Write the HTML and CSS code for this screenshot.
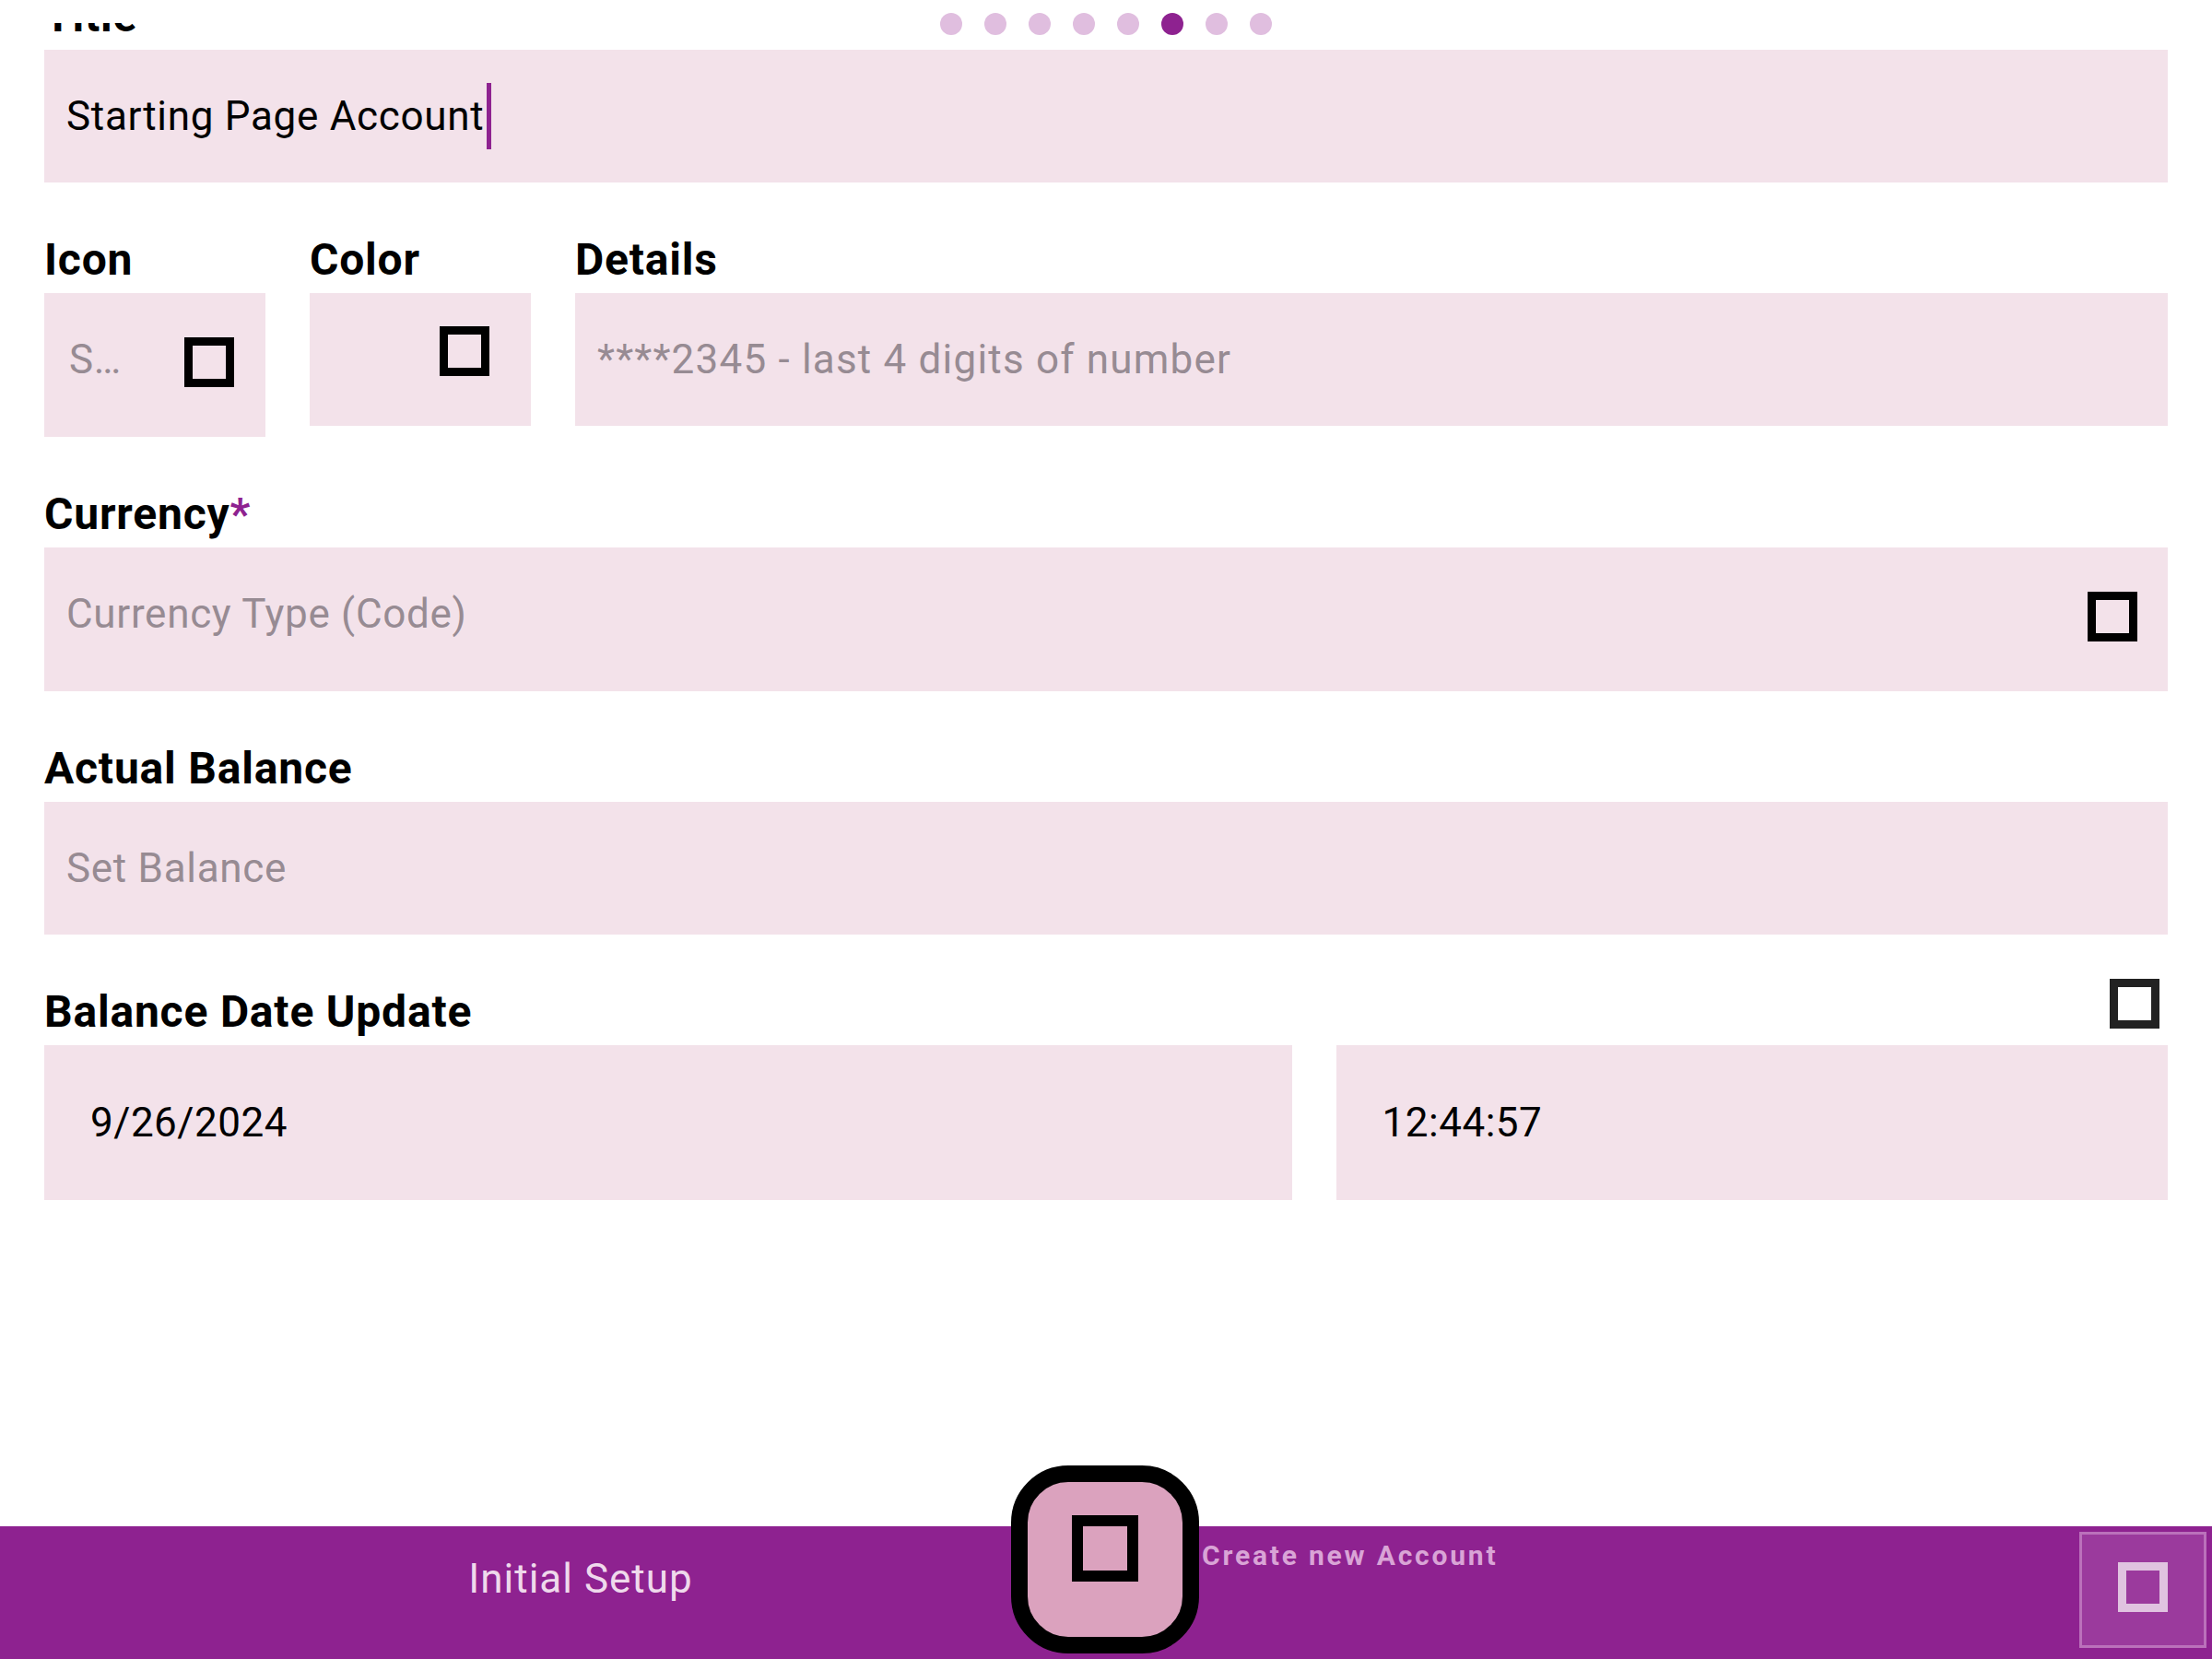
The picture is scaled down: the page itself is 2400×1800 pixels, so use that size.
FILE: index.html
```html
<!DOCTYPE html>
<html lang="en">
<head>
<meta charset="utf-8">
<title>Create new Account</title>
<link rel="stylesheet" href="styles.css">
</head>
<body>
<div class="app">
  <div class="dots">
    <span class="dot"></span><span class="dot"></span><span class="dot"></span><span class="dot"></span>
    <span class="dot"></span><span class="dot active"></span><span class="dot"></span><span class="dot"></span>
  </div>
  <main class="viewport">
    <div class="content">
      <section class="section">
        <div class="label">Title</div>
        <div class="field"><span class="value">Starting Page Account</span><span class="caret"></span></div>
      </section>

      <section class="section row3">
        <div class="col">
          <div class="label">Icon</div>
          <div class="field field-icon"><span class="placeholder">S…</span><span class="tofu"></span></div>
        </div>
        <div class="col">
          <div class="label">Color</div>
          <div class="field field-color"><span class="tofu"></span></div>
        </div>
        <div class="col">
          <div class="label">Details</div>
          <div class="field"><span class="placeholder wide">****2345 - last 4 digits of number</span></div>
        </div>
      </section>

      <section class="section">
        <div class="label">Currency<span class="req">*</span></div>
        <div class="field field-tall field-split"><span class="placeholder">Currency Type (Code)</span><span class="tofu tofu-down"></span></div>
      </section>

      <section class="section">
        <div class="label">Actual Balance</div>
        <div class="field"><span class="placeholder">Set Balance</span></div>
      </section>

      <section class="section">
        <div class="label-row">
          <div class="label">Balance Date Update</div>
          <span class="tofu tofu-dark"></span>
        </div>
        <div class="date-row">
          <div class="field field-date"><span class="value">9/26/2024</span></div>
          <div class="field field-date"><span class="value">12:44:57</span></div>
        </div>
      </section>
    </div>
  </main>
  <nav class="bottombar">
    <div class="nav-left">Initial Setup</div>
    <div class="nav-mid">Create new Account</div>
    <button class="nav-right" type="button"><span class="tofu tofu-light"></span></button>
    <button class="fab" type="button"><span class="tofu tofu-fab"></span></button>
  </nav>
</div>
</body>
</html>
```

FILE: styles.css
```css
* { box-sizing: border-box; }

html, body {
  margin: 0;
  padding: 0;
  background: #ffffff;
}

body {
  width: 2400px;
  height: 1800px;
  overflow: hidden;
  font-family: Roboto, "Noto Sans", sans-serif;
  color: #000000;
}

.app {
  position: relative;
  width: 2400px;
  height: 1800px;
  display: flex;
  flex-direction: column;
}

/* page indicator */
.dots {
  position: absolute;
  top: 14px;
  left: 0;
  right: 0;
  display: flex;
  justify-content: center;
  gap: 24px;
  z-index: 2;
}
.dot {
  width: 24px;
  height: 24px;
  border-radius: 50%;
  background: #e0bedf;
}
.dot.active { background: #8e2290; }

/* scroll area */
.viewport {
  flex: 1;
  margin-top: 25px;
  overflow: hidden;
}
.content {
  margin-top: -35px;
  padding: 0 48px;
}

.section + .section { margin-top: 56px; }

.label {
  font-size: 48px;
  font-weight: 700;
  line-height: 56px;
  letter-spacing: 0.8px;
  margin-bottom: 8px;
  white-space: nowrap;
}
.req { color: #8e2290; }

.field {
  height: 144px;
  background: #f3e2ea;
  display: flex;
  align-items: center;
  padding: 0 24px;
  font-size: 44px;
  line-height: 52px;
  letter-spacing: 0.7px;
}
.value { color: #000000; white-space: nowrap; }
.placeholder { color: #978b93; white-space: nowrap; }
.placeholder.wide { letter-spacing: 1.2px; }

.caret {
  display: inline-block;
  width: 5px;
  height: 72px;
  margin-left: 3px;
  background: #8e2290;
}

/* tofu / missing-glyph icons */
.tofu {
  display: block;
  flex: none;
  width: 54px;
  height: 54px;
  border: 9px solid #000000;
}
.tofu-down { margin-top: 6px; }
.tofu-dark { border-color: #222222; }
.tofu-light { border-color: #e0c3e0; }
.tofu-fab {
  width: 72px;
  height: 72px;
  border-width: 12px;
  margin-bottom: 24px;
}

/* icon / color / details row */
.row3 {
  display: grid;
  grid-template-columns: 240px 240px 1fr;
  column-gap: 48px;
  align-items: start;
}
.field-icon {
  height: 156px;
  padding: 0 34px 12px 27px;
  justify-content: space-between;
}
.field-icon .tofu { margin-top: 6px; }
.field-color {
  justify-content: flex-end;
  align-items: flex-start;
  padding: 36px 45px 0 0;
}

.field-tall {
  height: 156px;
  padding-bottom: 12px;
}
.field-split {
  justify-content: space-between;
  padding-right: 33px;
}

.label-row {
  display: flex;
  justify-content: space-between;
  align-items: flex-start;
}
.label-row .tofu {
  margin-top: -8px;
  margin-right: 9px;
}

.date-row {
  display: grid;
  grid-template-columns: 3fr 2fr;
  column-gap: 48px;
}
.field-date {
  height: 168px;
  padding-left: 50px;
  letter-spacing: 0.5px;
}

/* bottom navigation */
.bottombar {
  position: relative;
  flex: none;
  height: 144px;
  background: #8e2290;
  display: flex;
  align-items: flex-start;
}
.nav-left {
  width: 1260px;
  padding-top: 31px;
  text-align: center;
  font-size: 44px;
  line-height: 52px;
  letter-spacing: 1px;
  color: #efd9ec;
}
.nav-mid {
  margin-left: 44px;
  padding-top: 14px;
  font-size: 30px;
  font-weight: 700;
  line-height: 36px;
  letter-spacing: 2.8px;
  color: #d9a4d6;
  white-space: nowrap;
}
.nav-right {
  margin: 6px 6px 0 auto;
  width: 138px;
  height: 126px;
  padding: 0 0 6px 0;
  background: #9b3a9d;
  border: 3px solid #bb71bb;
  display: flex;
  align-items: center;
  justify-content: center;
}
.fab {
  position: absolute;
  left: 1097px;
  top: -66px;
  width: 204px;
  height: 204px;
  padding: 0;
  border: 18px solid #000000;
  border-radius: 62px;
  background: #dba2be;
  display: flex;
  align-items: center;
  justify-content: center;
}
```
